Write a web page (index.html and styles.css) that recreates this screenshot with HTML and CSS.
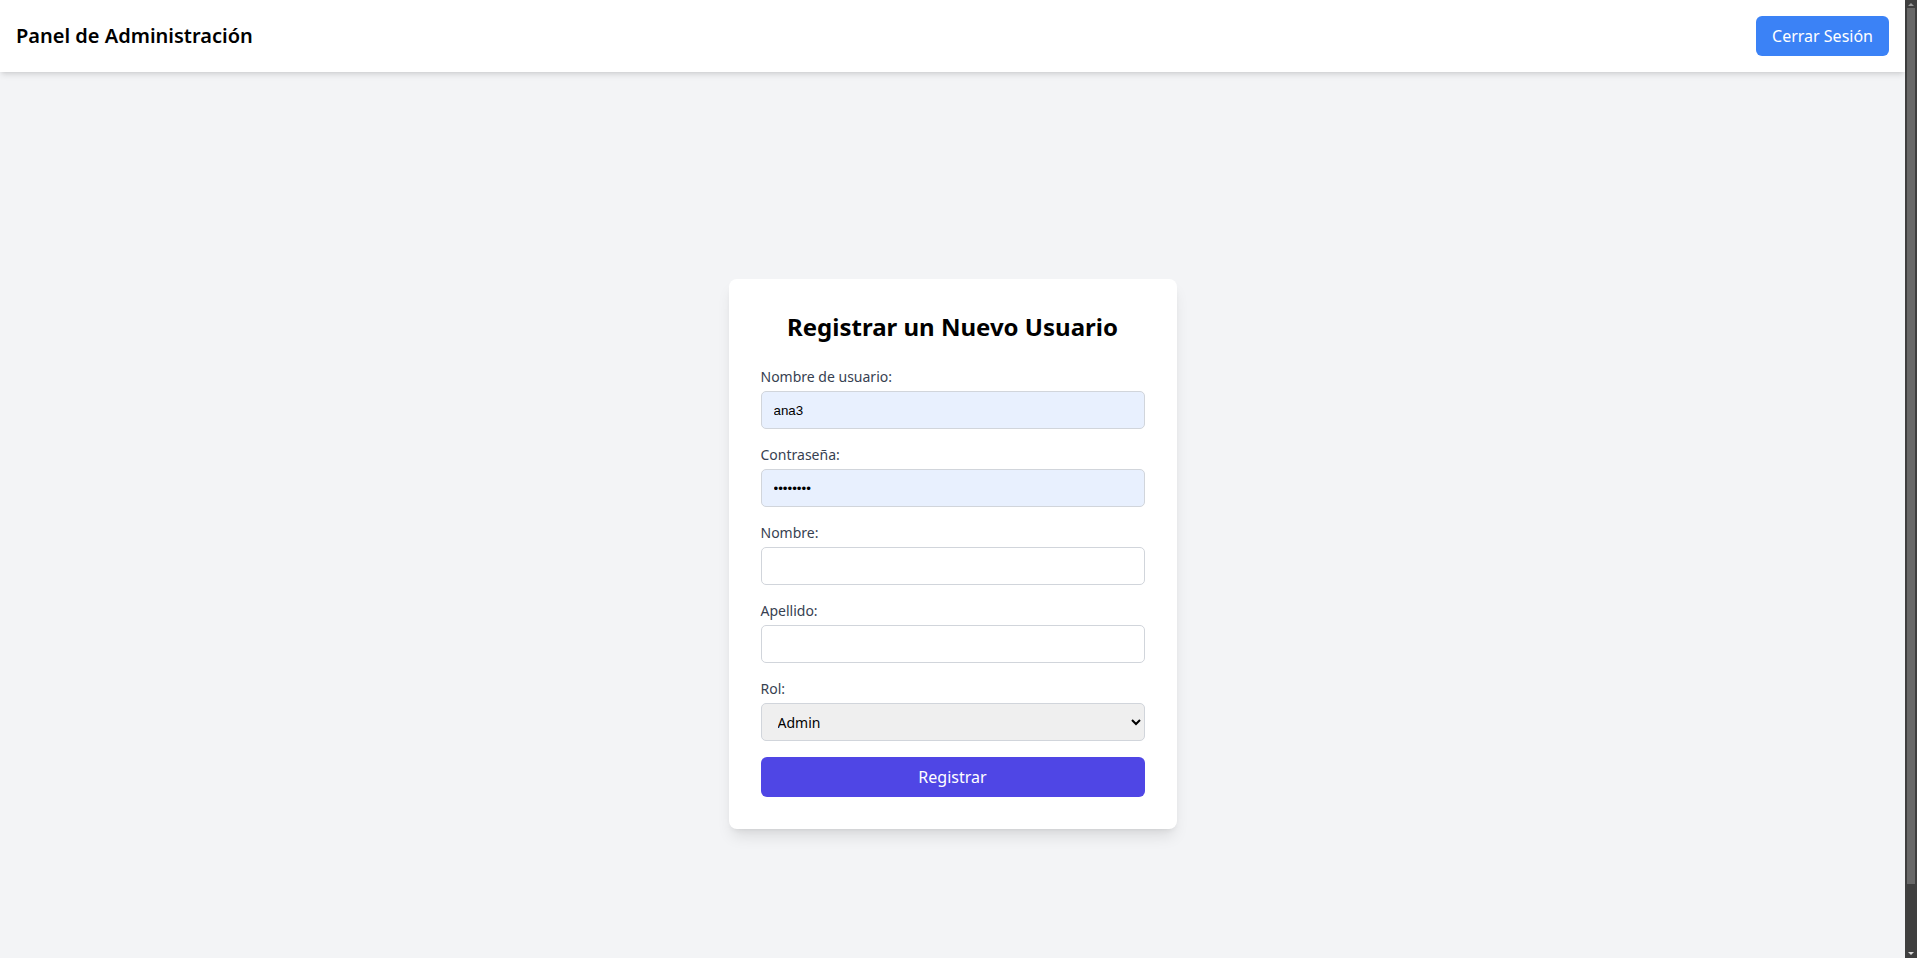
FILE: index.html
```html
<!DOCTYPE html>
<html lang="es">
<head>
<meta charset="utf-8">
<title>Panel de Administración</title>
<link rel="stylesheet" href="styles.css">
</head>
<body>
<div class="page">
  <div class="content">
    <header class="topbar">
      <h1 class="brand">Panel de Administración</h1>
      <button class="btn-logout" type="button">Cerrar Sesión</button>
    </header>
    <main class="main">
      <form class="card">
        <h2 class="card-title">Registrar un Nuevo Usuario</h2>
        <div class="field">
          <label class="label" for="username">Nombre de usuario:</label>
          <input class="input input-filled" id="username" type="text" value="ana3">
        </div>
        <div class="field">
          <label class="label" for="password">Contraseña:</label>
          <input class="input input-filled" id="password" type="password" value="12345678">
        </div>
        <div class="field">
          <label class="label" for="nombre">Nombre:</label>
          <input class="input" id="nombre" type="text">
        </div>
        <div class="field">
          <label class="label" for="apellido">Apellido:</label>
          <input class="input" id="apellido" type="text">
        </div>
        <div class="field">
          <label class="label" for="rol">Rol:</label>
          <select class="select" id="rol">
            <option>Admin</option>
            <option>Usuario</option>
          </select>
        </div>
        <button class="btn-submit" type="button">Registrar</button>
      </form>
    </main>
  </div>
  <div class="scrollbar" aria-hidden="true">
    <svg class="sb-arrow" width="12" height="8" viewBox="0 0 12 8"><path d="M3 6 L6 3 L9 6 Z" fill="#9a9a9a"/></svg>
    <div class="sb-track"><div class="sb-thumb"></div></div>
    <svg class="sb-arrow" width="12" height="8" viewBox="0 0 12 8"><path d="M3 2 L6 5 L9 2 Z" fill="#d8d8d8"/></svg>
  </div>
</div>
</body>
</html>
```

FILE: styles.css
```css
* {
  box-sizing: border-box;
}

html, body {
  margin: 0;
  padding: 0;
}

body {
  background: #f3f4f6;
  font-family: "Noto Sans", "Open Sans", sans-serif;
  color: #000;
}

.page {
  display: flex;
  align-items: flex-start;
}

.content {
  flex: 1;
  min-width: 0;
}

.scrollbar {
  position: sticky;
  top: 0;
  width: 12px;
  height: 100vh;
  flex: none;
  background: #3f3f3f;
  display: flex;
  flex-direction: column;
}

.sb-arrow {
  display: block;
  flex: none;
}

.sb-track {
  flex: 1;
  padding: 0 2px 66px;
  display: flex;
}

.sb-thumb {
  flex: 1;
  background: #686868;
}

.topbar {
  height: 72px;
  background: #ffffff;
  display: flex;
  align-items: center;
  justify-content: space-between;
  padding: 16px;
  box-shadow: 0 4px 6px -1px rgba(0, 0, 0, 0.1), 0 2px 4px -2px rgba(0, 0, 0, 0.1);
  position: relative;
  z-index: 1;
}

.brand {
  margin: 0;
  font-size: 20px;
  line-height: 28px;
  font-weight: 600;
  color: #000;
}

.btn-logout {
  height: 40px;
  padding: 8px 16px;
  border: none;
  border-radius: 6px;
  background: #3b82f6;
  color: #ffffff;
  font-family: "Noto Sans", sans-serif;
  font-size: 16px;
  line-height: 24px;
  cursor: pointer;
}

.main {
  min-height: 100vh;
  padding-top: 6px;
  display: flex;
  align-items: center;
  justify-content: center;
}

.card {
  width: 448px;
  background: #ffffff;
  border-radius: 8px;
  padding: 32px;
  box-shadow: 0 10px 15px -3px rgba(0, 0, 0, 0.1), 0 4px 6px -4px rgba(0, 0, 0, 0.1);
}

.card-title {
  margin: 0 0 24px;
  text-align: center;
  font-size: 24px;
  line-height: 32px;
  font-weight: 700;
  color: #000;
}

.field {
  margin-bottom: 16px;
}

.label {
  display: block;
  margin-bottom: 4px;
  font-size: 14px;
  line-height: 20px;
  color: #374151;
}

.input {
  display: block;
  width: 100%;
  height: 38px;
  padding: 0 12px;
  border: 1px solid #d1d5db;
  border-radius: 5px;
  background: #ffffff;
  font-family: "Liberation Sans", Arial, sans-serif;
  font-size: 13.333px;
  color: #000;
  outline: none;
}

.input-filled {
  background: #e8f0fe;
}

.select {
  display: block;
  width: 100%;
  height: 38px;
  padding: 0 8px 0 12px;
  border: 1px solid #d1d5db;
  border-radius: 5px;
  background-color: #efefef;
  font-family: "Noto Sans", sans-serif;
  font-size: 14px;
  color: #000;
  outline: none;
}

.btn-submit {
  display: block;
  width: 100%;
  height: 40px;
  border: none;
  border-radius: 6px;
  background: #4f46e5;
  color: #ffffff;
  font-family: "Noto Sans", sans-serif;
  font-size: 16px;
  line-height: 24px;
  cursor: pointer;
}
```
